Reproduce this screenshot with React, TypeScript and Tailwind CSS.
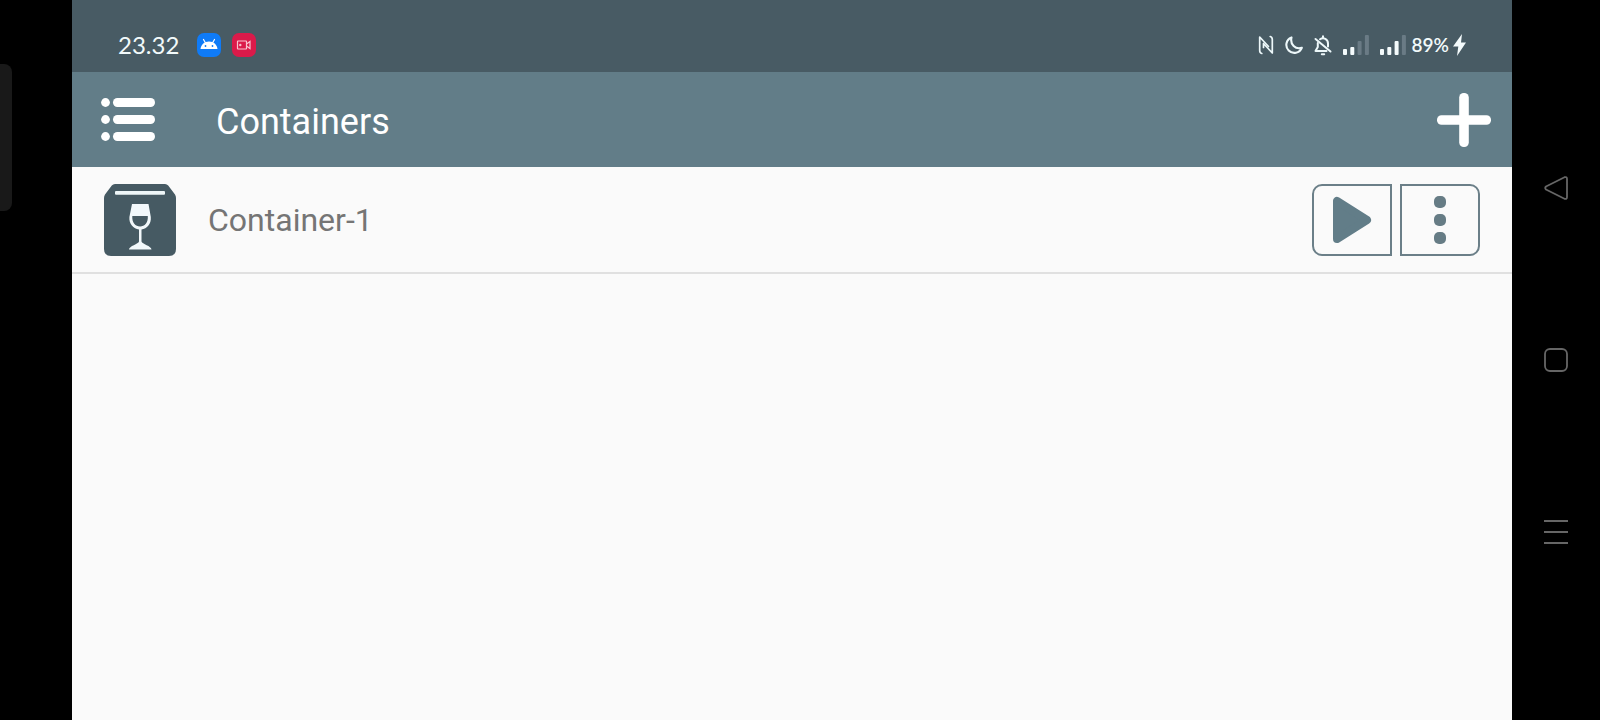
import type { ReactNode } from "react";

function ListIcon() {
  return (
    <svg width="54" height="43" viewBox="0 0 54 43" fill="#fff" aria-hidden="true">
      {[4.5, 21.5, 38.5].map((y) => (
        <g key={y}>
          <circle cx="4.5" cy={y} r="4.4" />
          <rect x="12" y={y - 4.5} width="42" height="9" rx="4.4" />
        </g>
      ))}
    </svg>
  );
}

function PlusIcon() {
  return (
    <svg width="54" height="54" viewBox="0 0 54 54" fill="#fff" aria-hidden="true">
      <rect x="22.200" y="0" width="9.600" height="54" rx="4.500" />
      <rect x="0" y="22.200" width="54" height="9.600" rx="4.500" />
    </svg>
  );
}

function ContainerIcon() {
  return (
    <svg width="72" height="72" viewBox="0 0 72 72" aria-hidden="true">
      <path
        d="M11 0H61Q63 0 64.200 1.600L71 10.500Q72 12 72 14V65Q72 72 65 72H7Q0 72 0 65V14Q0 12 1 10.500L7.800 1.600Q9 0 11 0Z"
        fill="#465a63"
      />
      <rect x="11" y="7" width="50" height="3.800" rx="1" fill="#eef6f8" />
      <path
        fill="#f2f8fb"
        fillRule="evenodd"
        d="M28 20H44.500L46.800 33C47.500 40 43 44.800 37.500 45.600V57.500C38 60 47.500 62 47.500 65.500H25C25 62 34.500 60 35 57.500V45.600C29.500 44.800 24.700 40 25.400 33ZM28.300 32C27.800 38.500 31.500 42.500 36.100 42.500S44.300 38.500 43.800 32Z"
      />
    </svg>
  );
}

function PlayIcon() {
  return (
    <svg width="40" height="48" viewBox="0 0 40 48" aria-hidden="true">
      <path d="M5 5V43L35 24Z" fill="#627d88" stroke="#627d88" strokeWidth="8" strokeLinejoin="round" />
    </svg>
  );
}

function MoreIcon() {
  return (
    <svg width="12" height="48" viewBox="0 0 12 48" fill="#667c85" aria-hidden="true">
      <rect y="0" width="12" height="12" rx="5" />
      <rect y="18" width="12" height="12" rx="5" />
      <rect y="36" width="12" height="12" rx="5" />
    </svg>
  );
}

function AndroidBadge() {
  return (
    <svg width="24" height="24" viewBox="0 0 24 24" aria-hidden="true">
      <rect width="24" height="24" rx="7" fill="#0f7bf7" />
      <path d="M3.500 16C4 11.500 7.500 8.500 12 8.500S20 11.500 20.500 16Z" fill="#fff" />
      <path d="M6.500 6.500L8.500 10M17.500 6.500L15.500 10" stroke="#fff" strokeWidth="1.200" strokeLinecap="round" />
      <circle cx="8.500" cy="13" r="0.900" fill="#0f7bf7" />
      <circle cx="15.500" cy="13" r="0.900" fill="#0f7bf7" />
    </svg>
  );
}

function RecorderBadge() {
  return (
    <svg width="24" height="24" viewBox="0 0 24 24" fill="none" stroke="#f9c3cf" strokeWidth="1.200" aria-hidden="true">
      <rect width="24" height="24" rx="7" fill="#db1a4a" stroke="none" />
      <rect x="5.500" y="8" width="9" height="8" rx="0.500" />
      <path d="M14.500 11L18 8.500V15.500L14.500 13" />
      <circle cx="8.300" cy="12" r="0.600" fill="#f9c3cf" />
    </svg>
  );
}

function NfcIcon() {
  return (
    <svg width="16" height="20" viewBox="0 0 16 20" fill="none" stroke="#edf8fa" strokeWidth="1.700" strokeLinejoin="round" strokeLinecap="round" aria-hidden="true">
      <path d="M3.800 18.500Q1.700 18 1.700 15.500V2L10.500 11.500" />
      <path d="M12.200 1.500Q14.300 2 14.300 4.500V18L5.500 8.500V12.500" />
    </svg>
  );
}

function MoonIcon() {
  return (
    <svg width="18" height="18" viewBox="0 0 18 18" fill="none" stroke="#edf8fa" strokeWidth="2.100" strokeLinejoin="round" aria-hidden="true">
      <path d="M6.500 1.400A8 8 0 1 0 16.800 11.800C10.500 13.800 4.800 8.500 6.500 1.400Z" />
    </svg>
  );
}

function BellOffIcon() {
  return (
    <svg width="18" height="21" viewBox="0 0 18 21" fill="none" stroke="#edf8fa" strokeWidth="2" strokeLinecap="round" strokeLinejoin="round" aria-hidden="true">
      <path d="M3.800 8V12L1.500 16H12.500" />
      <path d="M6 4.200C9.500 1.800 14 4 14 8.500V11.500" />
      <path d="M9 1.200V2.500M1.500 4L16.500 16.500" />
      <path d="M7.800 19.300H10.200" />
    </svg>
  );
}

function SignalIcon({ level }: { level: number }) {
  const heights = [6, 8, 14, 20];
  return (
    <svg width="26" height="20" viewBox="0 0 26 20" aria-hidden="true">
      {heights.map((h, i) => (
        <rect key={h} x={i * 7.3} y={20 - h} width="4" height={h} rx="1" fill={i < level ? "#f4fbfc" : "#6a7b85"} />
      ))}
    </svg>
  );
}

function BoltIcon() {
  return (
    <svg width="13" height="22" viewBox="0 0 13 22" fill="#f4fbfc" aria-hidden="true">
      <path d="M9 0L0 12.500H5.300L4 22L13 8.500H8Z" />
    </svg>
  );
}

function NavButton({ label, children }: { label: string; children: ReactNode }) {
  return (
    <button type="button" aria-label={label} className="size-6">
      <svg width="24" height="24" viewBox="0 0 24 24" fill="none" stroke="#666" strokeWidth="1.800" strokeLinejoin="round" aria-hidden="true">
        {children}
      </svg>
    </button>
  );
}

export default function App() {
  return (
    <div className="flex min-h-screen bg-black font-['Roboto',sans-serif]">
      <div className="w-18 shrink-0 pt-16">
        <div className="h-[147px] w-3 rounded-r-lg bg-[#191919]" />
      </div>

      <div className="flex min-w-0 flex-1 flex-col bg-[#fafafa]">
        <div className="flex h-18 items-center justify-between bg-[#485b64] pt-[18px] pr-[46px] pl-[46px] font-['Lato',sans-serif] text-[#f2fafb]">
          <div className="flex items-center gap-[18px]">
            <span className="text-[24px] leading-6">23.32</span>
            <div className="flex gap-[11px]">
              <AndroidBadge />
              <RecorderBadge />
            </div>
          </div>
          <div className="flex items-center gap-1">
            <div className="flex items-center gap-[11px]">
              <NfcIcon />
              <MoonIcon />
              <BellOffIcon />
              <SignalIcon level={2} />
              <SignalIcon level={3} />
            </div>
            <span className="ml-[2px] text-[19px] leading-6 font-semibold">89%</span>
            <BoltIcon />
          </div>
        </div>

        <header className="flex h-[95px] items-center bg-[#627d88] pr-[21px] pl-[29px]">
          <button type="button" aria-label="Open menu">
            <ListIcon />
          </button>
          <h1 className="ml-[61px] flex-1 pt-1 text-[36px] leading-10 text-white">Containers</h1>
          <button type="button" aria-label="Add container">
            <PlusIcon />
          </button>
        </header>

        <main>
          <ul>
            <li className="flex h-[107px] items-center border-b-2 border-[#e0e0e0] px-8">
              <ContainerIcon />
              <span className="ml-8 flex-1 text-[32px] leading-10 text-[#757575]">Container-1</span>
              <div className="flex gap-2">
                <button
                  type="button"
                  aria-label="Run Container-1"
                  className="flex h-18 w-20 items-center justify-center rounded-l-[10px] border-2 border-[#6b7f88]"
                >
                  <PlayIcon />
                </button>
                <button
                  type="button"
                  aria-label="More options for Container-1"
                  className="flex h-18 w-20 items-center justify-center rounded-r-[10px] border-2 border-[#6b7f88]"
                >
                  <MoreIcon />
                </button>
              </div>
            </li>
          </ul>
        </main>
      </div>

      <nav aria-label="System navigation" className="flex w-22 shrink-0 flex-col items-center justify-center gap-[148px]">
        <NavButton label="Back">
          <path d="M2 10.500L20.500 1.200Q23 0.500 23 3V21Q23 23.500 20.500 22.800L2 13.500Q0.500 12 2 10.500Z" />
        </NavButton>
        <NavButton label="Home">
          <rect x="1" y="1" width="22" height="22" rx="5" />
        </NavButton>
        <NavButton label="Recent apps">
          <path d="M0 1H24M0 12H24M0 23H24" />
        </NavButton>
      </nav>
    </div>
  );
}
